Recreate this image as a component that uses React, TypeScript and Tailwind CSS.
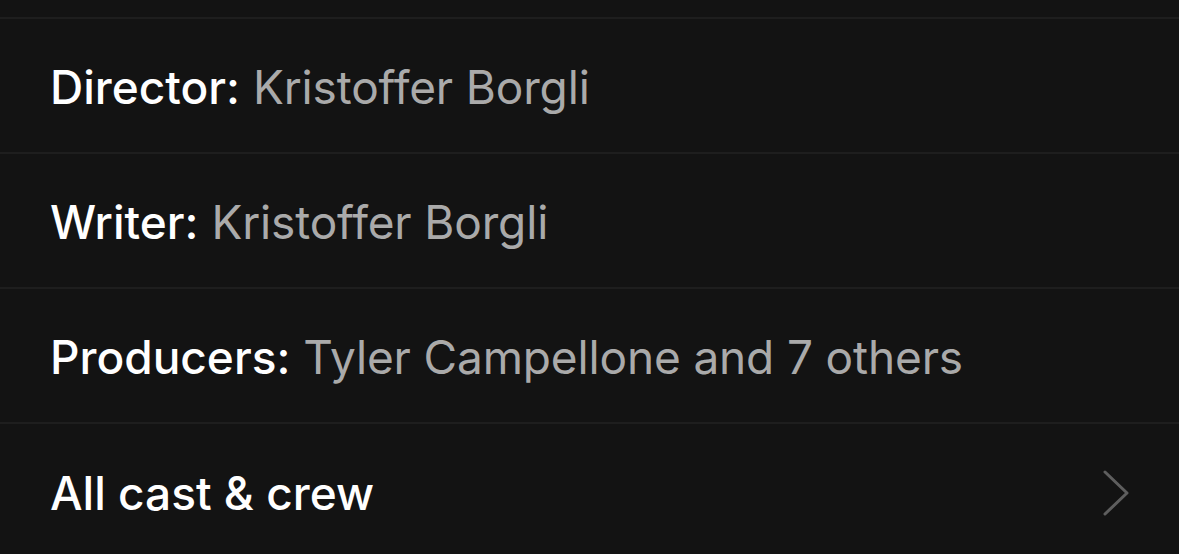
const ROWS = [
  { label: "Director:", value: "Kristoffer Borgli" },
  { label: "Writer:", value: "Kristoffer Borgli" },
  { label: "Producers:", value: "Tyler Campellone and 7 others" },
];

function Chevron() {
  return (
    <svg width="30" height="48" viewBox="0 0 30 48" fill="none" className="text-[#5e5e5e]">
      <polyline
        points="4,3 26,24 4,45"
        stroke="currentColor"
        strokeWidth="3"
        strokeLinecap="round"
        strokeLinejoin="round"
      />
    </svg>
  );
}

export default function App() {
  return (
    <div
      className="w-[1179px] h-[554px] overflow-hidden bg-[#131313] text-white"
      style={{ fontFamily: "Inter, 'Noto Sans', sans-serif" }}
    >
      {/* tail of the previous section */}
      <div className="h-[19px] border-b-2 border-[#1e1e1e]" />

      {ROWS.map(({ label, value }) => (
        <div key={label} className="h-[135px] border-b-2 border-[#1e1e1e] flex items-center pl-[50px] pt-[3px]">
          <p className="text-[46px]">
            <span className="font-medium text-white">{label}</span>{" "}
            <span className="text-[#aaaaaa] tracking-[-0.15px]">{value}</span>
          </p>
        </div>
      ))}

      <div className="h-[135px] flex items-center justify-between pl-[50px] pr-[48px] pt-[3px]">
        <span className="text-[46px] font-medium">All cast &amp; crew</span>
        <Chevron />
      </div>
    </div>
  );
}
